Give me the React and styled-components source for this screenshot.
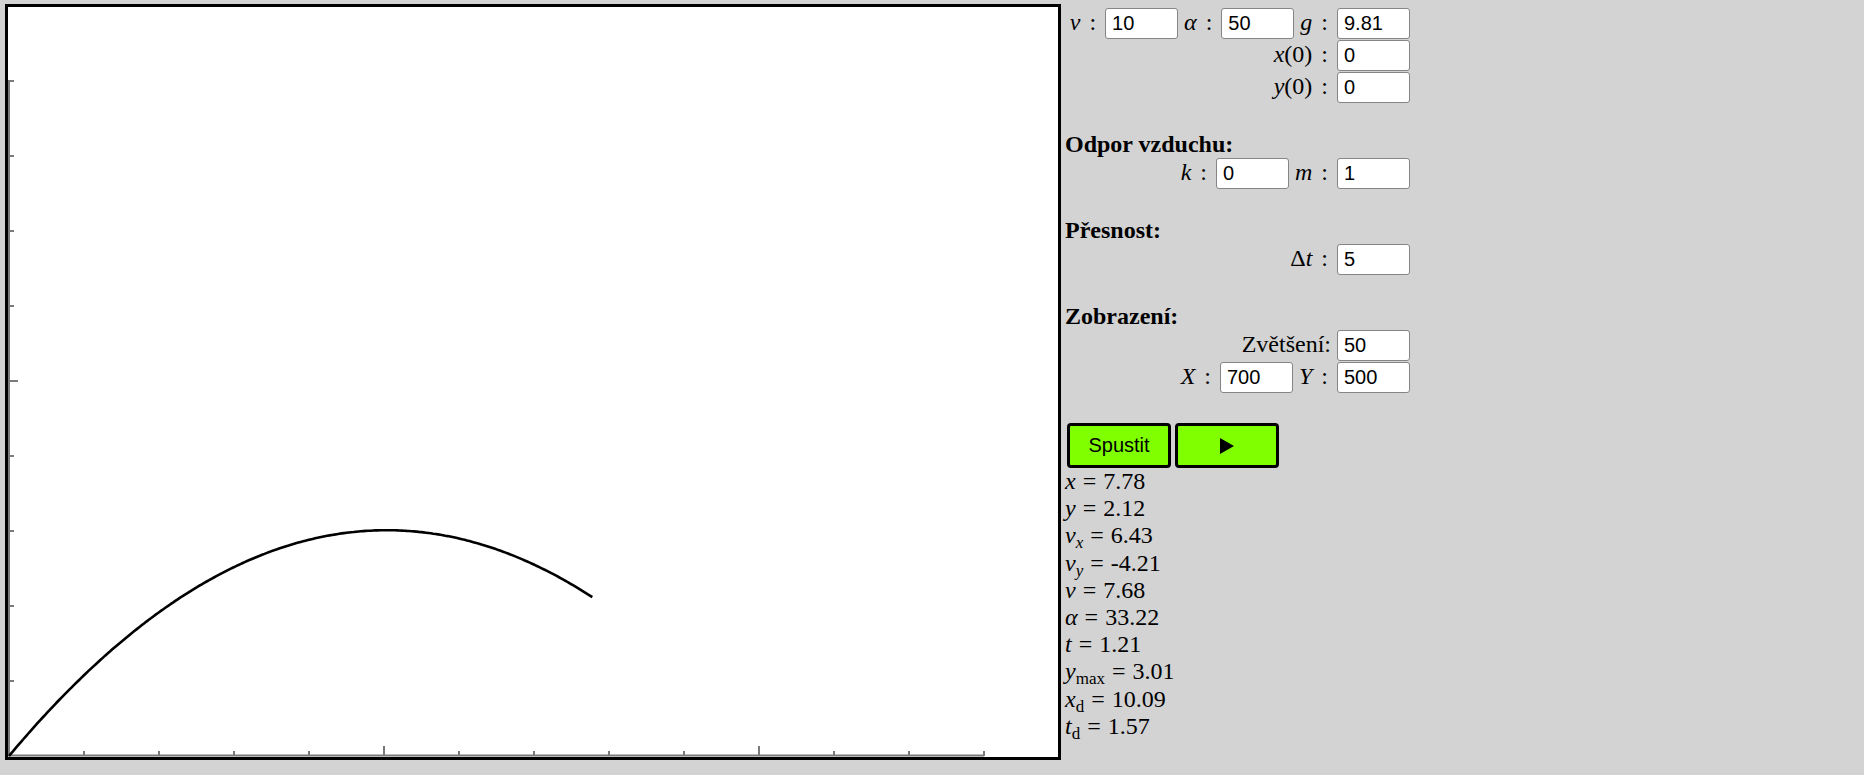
import styled, { createGlobalStyle } from 'styled-components'

const GlobalStyle = createGlobalStyle`
  html, body {
    margin: 0;
    background: #d3d3d3;
  }
  body {
    font-family: "Liberation Serif", "Times New Roman", serif;
    font-size: 24px;
    color: #000;
  }
`

// simulace vrhu - Euler, stejne jako v puvodni aplikaci
const V = 10
const ALPHA = 50
const G = 9.81
const DT = 0.005
const T_END = 1.21
const SCALE = 75
const OX = 1
const OY = 749

function trajectory() {
  let x = 0
  let y = 0
  let vx = V * Math.cos((ALPHA * Math.PI) / 180)
  let vy = V * Math.sin((ALPHA * Math.PI) / 180)
  const pts = [[OX, OY]]
  const steps = Math.round(T_END / DT)
  for (let i = 0; i < steps; i++) {
    x += vx * DT
    y += vy * DT
    vy -= G * DT
    pts.push([OX + x * SCALE, OY - y * SCALE])
  }
  return 'M' + pts.map((p) => p[0].toFixed(1) + ' ' + p[1].toFixed(1)).join(' L')
}

function Chart() {
  const xTicks = Array.from({ length: 13 }, (_, i) => i + 1)
  const yTicks = Array.from({ length: 9 }, (_, i) => i + 1)
  return (
    <svg width="1050" height="750" viewBox="0 0 1050 750">
      <g stroke="#7a7a7a" strokeWidth="2" fill="none">
        <line x1={OX} y1={OY} x2={OX} y2={OY - 9 * SCALE} />
        <line x1={0} y1={OY - 0.5} x2={OX + 13 * SCALE} y2={OY - 0.5} />
        {xTicks.map((k) => (
          <line key={'x' + k} x1={OX + k * SCALE} y1={OY} x2={OX + k * SCALE} y2={OY - (k % 5 === 0 ? 10 : 5)} />
        ))}
        {yTicks.map((k) => (
          <line key={'y' + k} x1={0} y1={OY - k * SCALE} x2={k % 5 === 0 ? 10 : 6} y2={OY - k * SCALE} />
        ))}
      </g>
      <path d={trajectory()} stroke="#000" strokeWidth="2.6" fill="none" strokeLinejoin="round" />
    </svg>
  )
}

function Param({ name, rest, value, first, plain }) {
  return (
    <>
      <Label $first={first}>
        {plain ? (
          <span>{name}</span>
        ) : (
          <>
            <Var>{name}</Var>
            {rest && <span>{rest}</span>}
            <Colon>:</Colon>
          </>
        )}
      </Label>
      <Field defaultValue={value} $plain={plain} />
    </>
  )
}

export default function App() {
  return (
    <>
      <GlobalStyle />
      <Page>
        <Board>
          <Chart />
        </Board>

        <Panel>
          <Row>
            <Param name="v" value="10" first />
            <Param name="α" value="50" />
            <Param name="g" value="9.81" />
          </Row>
          <Row>
            <Param name="x" rest="(0)" value="0" first />
          </Row>
          <Row>
            <Param name="y" rest="(0)" value="0" first />
          </Row>

          <Heading>Odpor vzduchu:</Heading>
          <Row>
            <Param name="k" value="0" first />
            <Param name="m" value="1" />
          </Row>

          <Heading>Přesnost:</Heading>
          <Row>
            <Label $first>
              <span>Δ</span>
              <Var>t</Var>
              <Colon>:</Colon>
            </Label>
            <Field defaultValue="5" />
          </Row>

          <Heading>Zobrazení:</Heading>
          <Row>
            <Param name="Zvětšení:" value="50" first plain />
          </Row>
          <Row>
            <Param name="X" value="700" first />
            <Param name="Y" value="500" />
          </Row>

          <Buttons>
            <GoButton>Spustit</GoButton>
            <GoButton>
              <svg width="16" height="16" viewBox="0 0 16 16">
                <polygon points="1,0 15,8 1,16" fill="#000" />
              </svg>
            </GoButton>
          </Buttons>

          <Results>
            <Line><Var>x</Var><Eq>=</Eq>7.78</Line>
            <Line><Var>y</Var><Eq>=</Eq>2.12</Line>
            <Line><Var>v</Var><Sub>x</Sub><Eq>=</Eq>6.43</Line>
            <Line><Var>v</Var><Sub>y</Sub><Eq>=</Eq>-4.21</Line>
            <Line><Var>v</Var><Eq>=</Eq>7.68</Line>
            <Line><Var>α</Var><Eq>=</Eq>33.22</Line>
            <Line><Var>t</Var><Eq>=</Eq>1.21</Line>
            <Line><Var>y</Var><Sub $up>max</Sub><Eq>=</Eq>3.01</Line>
            <Line><Var>x</Var><Sub $up>d</Sub><Eq>=</Eq>10.09</Line>
            <Line><Var>t</Var><Sub $up>d</Sub><Eq>=</Eq>1.57</Line>
          </Results>
        </Panel>
      </Page>
    </>
  )
}

const Page = styled.div`
  display: flex;
  align-items: flex-start;
  gap: 4px;
  padding: 4px 0 0 5px;
  min-height: 771px;
`

const Board = styled.div`
  width: 1050px;
  height: 750px;
  border: 3px solid #000;
  background: #fff;
  svg {
    display: block;
  }
`

const Panel = styled.div`
  width: 345px;
  padding-top: 4px;
  display: flex;
  flex-direction: column;
`

const Row = styled.div`
  height: 32px;
  display: flex;
  justify-content: flex-end;
  align-items: flex-start;
`

const Label = styled.span`
  display: inline-flex;
  align-items: baseline;
  height: 31px;
  line-height: 29px;
  margin-left: ${(p) => (p.$first ? '0' : '6px')};
  margin-right: ${(p) => (p.$first ? '0' : '0')};
  white-space: nowrap;
  span:only-child {
    margin-right: 6px;
  }
`

const Var = styled.i`
  font-style: italic;
`

const Colon = styled.span`
  margin: 0 9px 0 9px;
`

const Field = styled.input`
  box-sizing: border-box;
  width: 73px;
  height: 31px;
  padding: 0 3px 0 6px;
  border: 1px solid #858585;
  border-radius: 3px;
  background: #fff;
  color: #000;
  font: 20px "Liberation Sans", Arial, sans-serif;
  outline: none;
`

const Heading = styled.b`
  display: block;
  font-weight: bold;
  height: 27px;
  line-height: 27px;
  margin-top: 27px;
`

const Buttons = styled.div`
  display: flex;
  gap: 4px;
  margin: 29px 0 0 2px;
`

const GoButton = styled.button`
  box-sizing: border-box;
  width: 104px;
  height: 45px;
  padding: 0;
  border: 3px solid #000;
  border-radius: 4px;
  background: #7fff00;
  color: #000;
  font: 20px "Liberation Sans", Arial, sans-serif;
  display: flex;
  align-items: center;
  justify-content: center;
`

const Results = styled.div`
  line-height: 27.2px;
`

const Line = styled.div`
  white-space: nowrap;
`

const Eq = styled.span`
  margin: 0 7px;
`

const Sub = styled.span`
  display: inline-block;
  font-size: 17px;
  line-height: 0;
  font-style: ${(p) => (p.$up ? 'normal' : 'italic')};
  vertical-align: -5px;
`
